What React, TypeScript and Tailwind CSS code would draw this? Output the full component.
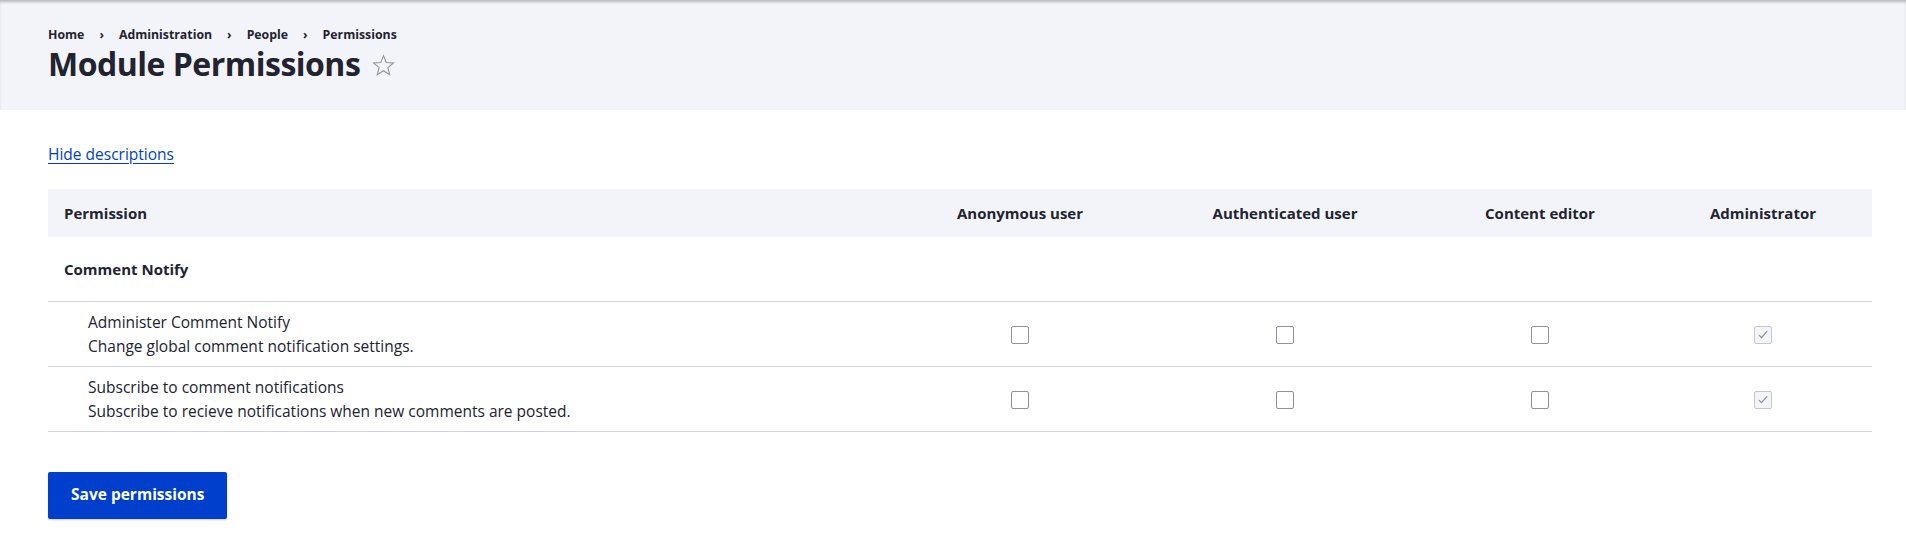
import React from 'react';

const roles = ['Anonymous user', 'Authenticated user', 'Content editor', 'Administrator'];

const permissions = [
  {
    title: 'Administer Comment Notify',
    description: 'Change global comment notification settings.',
  },
  {
    title: 'Subscribe to comment notifications',
    description: 'Subscribe to recieve notifications when new comments are posted.',
  },
];

function Checkbox({ locked }: { locked?: boolean }) {
  if (locked) {
    return (
      <span className="inline-flex h-[18px] w-[18px] items-center justify-center rounded-[2px] border border-[#c6c7cc] bg-[#f3f4f9] align-middle">
        <svg viewBox="0 0 16 16" className="h-[12px] w-[12px]" fill="none" stroke="#8e929c" strokeWidth={1.8}>
          <path d="M3 8.5l3 3 7-8" strokeLinecap="round" strokeLinejoin="round" />
        </svg>
      </span>
    );
  }
  return (
    <span className="inline-block h-[18px] w-[18px] rounded-[2px] border border-[#8e929c] bg-white align-middle" />
  );
}

export default function App() {
  const crumbs = ['Home', 'Administration', 'People', 'Permissions'];

  return (
    <div className="min-h-screen bg-white text-[#222330]" style={{ fontFamily: '"Open Sans", "Noto Sans", sans-serif' }}>
      <header className="bg-[#f3f4f9] pl-12 pr-[34px] pt-[25px] pb-[24px] shadow-[inset_0_3px_3px_-1px_rgba(0,0,0,0.25)]">
        <nav className="flex items-center text-[12.3px] font-bold leading-[20px]">
          {crumbs.map((c, i) => (
            <React.Fragment key={c}>
              {i > 0 && <span className="mx-[15px]">›</span>}
              <span>{c}</span>
            </React.Fragment>
          ))}
        </nav>
        <div className="mt-[-3px] flex items-center">
          <h1 className="text-[32px] font-bold leading-[44px] tracking-[-0.5px]">Module Permissions</h1>
          <svg viewBox="0 0 24 24" className="ml-[11px] mt-[2px] h-[25px] w-[25px]" fill="none" stroke="#8e929c" strokeWidth={1}>
            <path d="M12 2.5l2.6 6.6 7 .4-5.4 4.5 1.8 6.9L12 17l-6 3.9 1.8-6.9L2.4 9.5l7-.4z" strokeLinejoin="miter" />
          </svg>
        </div>
      </header>

      <main className="pl-12 pr-[34px] pt-[32px]">
        <a href="#" className="text-[15.5px] leading-[24px] text-[#003ecc] underline underline-offset-[3px]">
          Hide descriptions
        </a>

        <table className="mt-[23px] w-[1824px] table-fixed border-collapse text-[15.5px]">
          <thead>
            <tr className="bg-[#f3f4f9]">
              <th className="h-[48px] w-[848px] px-4 text-left text-[15px] font-bold">Permission</th>
              <th className="w-[248px] px-4 text-center text-[15px] font-bold">{roles[0]}</th>
              <th className="w-[282px] px-4 text-center text-[15px] font-bold">{roles[1]}</th>
              <th className="w-[228px] px-4 text-center text-[15px] font-bold">{roles[2]}</th>
              <th className="w-[218px] px-4 text-center text-[15px] font-bold">{roles[3]}</th>
            </tr>
          </thead>
          <tbody>
            <tr className="border-b border-[#d3d4d9]">
              <td colSpan={5} className="h-[64px] px-4 text-[15px] font-bold">
                Comment Notify
              </td>
            </tr>
            {permissions.map((p) => (
              <tr key={p.title} className="border-b border-[#d3d4d9]">
                <td className="py-2 pl-10 pr-4 leading-[24px]">
                  <div>{p.title}</div>
                  <div>{p.description}</div>
                </td>
                {roles.map((r) => (
                  <td key={r} className="px-4 text-center">
                    <Checkbox locked={r === 'Administrator'} />
                  </td>
                ))}
              </tr>
            ))}
          </tbody>
        </table>

        <button className="mt-[40px] h-[47px] rounded-[2px] bg-[#003ecc] px-[23px] text-[15.5px] font-bold text-white shadow-[0_1px_2px_rgba(0,0,0,0.2)]">
          Save permissions
        </button>
      </main>
    </div>
  );
}
